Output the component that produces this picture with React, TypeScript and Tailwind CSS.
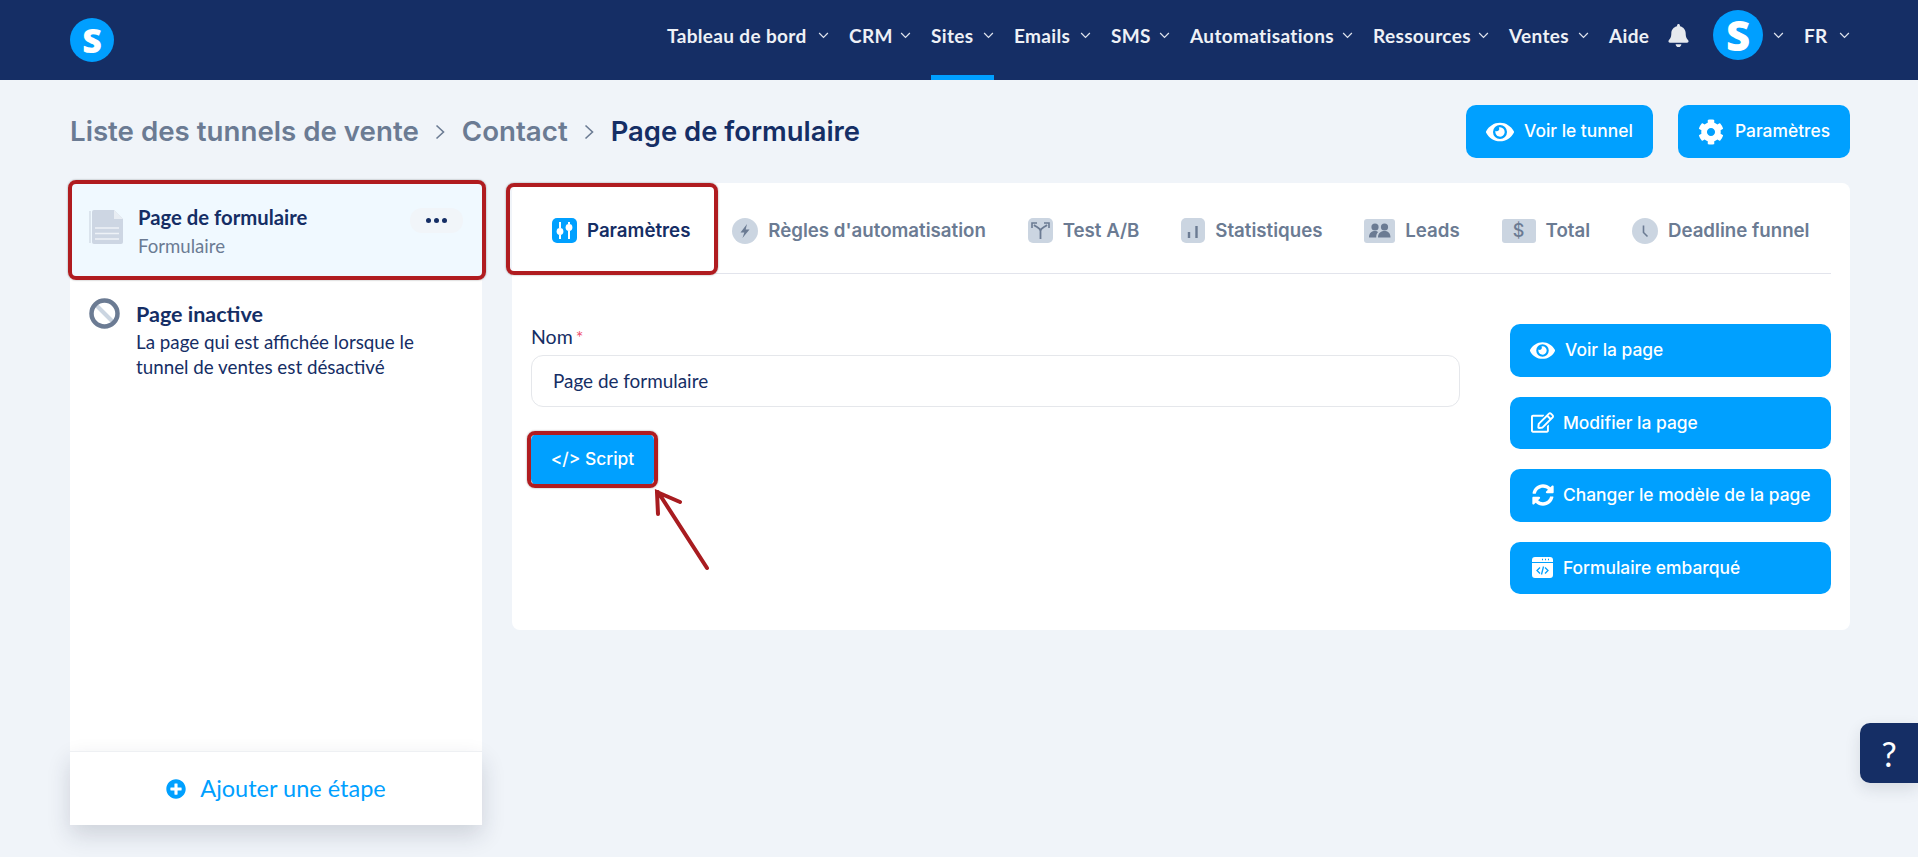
import React from "react";
import { FaBell, FaCog, FaEye, FaRegEdit, FaSyncAlt, FaPlusCircle } from "react-icons/fa";

const geo = "font-['Lato','Noto_Sans',sans-serif]";
const inter = "font-['Inter',sans-serif]";

function Chev({ className = "" }: { className?: string }) {
  return (
    <svg viewBox="0 0 12 8" className={"w-[11px] h-[7px] " + className} fill="none" stroke="currentColor" strokeWidth="1.4">
      <path d="M1 1.2 6 6.2 11 1.2" />
    </svg>
  );
}

function NavItem({ label, w, chev = true, active = false, gap = 20 }: { label: string; w: number; chev?: boolean; active?: boolean; gap?: number }) {
  return (
    <div className="relative flex items-center h-full" style={{ marginRight: gap }}>
      <span className="whitespace-nowrap text-[19px] tracking-[0.35px] font-bold text-[#eef1f6] pb-[8px]" style={{ width: w }}>{label}</span>
      {chev && <Chev className="ml-[10px] mb-[10px] text-[#dfe4ee]" />}
      {active && <div className="absolute left-0 right-0 bottom-0 h-[5px] bg-[#009fff]" />}
    </div>
  );
}

function LogoS({ size, font }: { size: number; font: number }) {
  return (
    <div className="rounded-full bg-[#009fff] flex items-center justify-center text-white font-['Open_Sans',sans-serif] font-extrabold" style={{ width: size, height: size, fontSize: font, lineHeight: 1 }}>
      S
    </div>
  );
}

function Crumb() {
  return (
    <svg viewBox="0 0 10 16" className="w-[10px] h-[16px] text-[#6b7b93]" fill="none" stroke="currentColor" strokeWidth="1.6">
      <path d="M1.5 1.5 8.5 8 1.5 14.5" />
    </svg>
  );
}

function Tab({ icon, label, active = false }: { icon: React.ReactNode; label: string; active?: boolean }) {
  return (
    <div className="flex items-center gap-[10px]">
      {icon}
      <span className={"whitespace-nowrap text-[18.7px] font-semibold " + (active ? "text-[#152e65]" : "text-[#6b7b93]")}>{label}</span>
    </div>
  );
}

function SideBtn({ icon, label, gap }: { icon: React.ReactNode; label: string; gap: number }) {
  return (
    <div className="h-[52.5px] rounded-[10px] bg-[#00a0ff] text-white flex items-center pl-[20px] text-[17.4px] font-medium">
      <span className="flex items-center justify-center w-[25px]">{icon}</span>
      <span className="whitespace-nowrap" style={{ marginLeft: gap }}>{label}</span>
    </div>
  );
}

const Red = "absolute border-4 border-[#b01c20] rounded-[8px] shadow-[0_0_2px_rgba(0,0,0,0.4)] pointer-events-none";

export default function App() {
  return (
    <div className={"relative min-h-[857px] bg-[#f0f4f9] overflow-hidden " + inter}>
      <header className="h-[80px] bg-[#152e65] flex items-center justify-between pl-[70px] pr-[68px]">
        <LogoS size={44} font={34} />
        <nav className={"flex items-center h-full " + geo}>
          <NavItem label="Tableau de bord" w={141} />
          <NavItem label="CRM" w={41} />
          <NavItem label="Sites" w={42} active />
          <NavItem label="Emails" w={56} />
          <NavItem label="SMS" w={38} />
          <NavItem label="Automatisations" w={142} />
          <NavItem label="Ressources" w={95} />
          <NavItem label="Ventes" w={59} />
          <NavItem label="Aide" w={38} chev={false} />
          <FaBell className="text-[#e6e9ee] text-[23px] mb-[10px]" />
          <div className="ml-[23px] mb-[10px]"><LogoS size={50} font={42} /></div>
          <Chev className="ml-[10px] mb-[10px] text-[#dfe4ee]" />
          <div className="ml-[20px]"><NavItem label="FR" w={25} gap={0} /></div>
        </nav>
      </header>

      <div className="flex items-center justify-between pl-[70px] pr-[68px] pt-[25px] h-[78px]">
        <div className="flex items-center gap-[16.5px] text-[27.7px] font-semibold text-[#6b7b93] whitespace-nowrap pt-[1px]">
          <span>Liste des tunnels de vente</span>
          <Crumb />
          <span>Contact</span>
          <Crumb />
          <span className="text-[#152e65] text-[27.4px]">Page de formulaire</span>
        </div>
        <div className="flex gap-[25px]">
          <div className="h-[53px] w-[187px] rounded-[10px] bg-[#00a0ff] text-white flex items-center pl-[20px] gap-[10px] text-[17.4px] font-medium">
            <FaEye className="text-[28px]" />
            <span>Voir le tunnel</span>
          </div>
          <div className="h-[53px] w-[172px] rounded-[10px] bg-[#00a0ff] text-white flex items-center pl-[20px] gap-[11px] text-[17.4px] font-medium">
            <FaCog className="text-[26px]" />
            <span>Paramètres</span>
          </div>
        </div>
      </div>

      <div className="flex gap-[30px] pl-[70px] pr-[68px] pt-[25px]">
        <aside className="w-[413px] h-[642px] flex flex-col bg-white">
          <div className={"relative h-[94px] bg-[#f0f9ff] flex items-start pl-[19px] pr-[19px] " + geo}>
            <svg viewBox="0 0 34 34" className="w-[34px] h-[34px] mt-[27px] shrink-0">
              <path d="M1 1V33" stroke="#d5dde7" strokeWidth="1.500" />
              <path d="M3 2a2 2 0 0 1 2-2h20l9 9v23a2 2 0 0 1-2 2H5a2 2 0 0 1-2-2z" fill="#cdd6e3" />
              <path d="M25 0l9 9h-9z" fill="#e8edf3" />
              <path d="M6 18h24M6 23.5h24M6 29h24" stroke="#eef2f7" strokeWidth="1.6" />
            </svg>
            <div className="ml-[15px] mt-[22px]">
              <div className="text-[20.3px] font-bold text-[#152e65] leading-[24px] whitespace-nowrap">Page de formulaire</div>
              <div className="text-[18.6px] text-[#6b7b93] leading-[24px] mt-[5px]">Formulaire</div>
            </div>
            <div className="ml-auto mt-[25px] w-[53px] h-[25px] rounded-[12px] bg-[#f1f5f9] flex items-center justify-center gap-[3px]">
              <i className="w-[5px] h-[5px] rounded-full bg-[#152e65]" />
              <i className="w-[5px] h-[5px] rounded-full bg-[#152e65]" />
              <i className="w-[5px] h-[5px] rounded-full bg-[#152e65]" />
            </div>
            <div className={Red + " -left-[2.5px] -right-[4px] -top-[3px] -bottom-[3px]"} />
          </div>
          <div className={"flex items-start pl-[19px] pr-[20px] pt-[21px] " + geo}>
            <svg viewBox="0 0 31 31" className="w-[31px] h-[31px] shrink-0">
              <path d="M6 6 25 25" stroke="#cbd5e1" strokeWidth="4" />
              <circle cx="15.5" cy="15.5" r="13" fill="none" stroke="#6b7b93" strokeWidth="4.5" />
            </svg>
            <div className="ml-[16px] mt-[3px]">
              <div className="text-[21.5px] font-bold text-[#152e65] leading-[26px]">Page inactive</div>
              <div className="text-[18.8px] text-[#152e65] leading-[25px] mt-[2px]">La page qui est affichée lorsque le<br />tunnel de ventes est désactivé</div>
            </div>
          </div>
          <div className={"mt-auto h-[74px] border-t border-[#eef0f3] bg-white flex items-center justify-center gap-[14px] shadow-[0_10px_22px_rgba(30,40,60,0.16)] " + geo}>
            <FaPlusCircle className="text-[20px] text-[#00a0ff]" />
            <span className="text-[23.5px] text-[#00a0ff]">Ajouter une étape</span>
          </div>
        </aside>

        <main className="relative flex-1 h-[447px] bg-white rounded-[8px] pl-[19px] pr-[19px]">
          <div className="relative h-[91px] border-b border-[#e2e4ec] pl-[21px] pt-[6px] flex items-center gap-[41.8px]">
            <Tab
              active
              label="Paramètres"
              icon={
                <svg viewBox="0 0 25 25" className="w-[25px] h-[25px]">
                  <rect width="25" height="25" rx="5" fill="#00a0ff" />
                  <path d="M8 4v6M8 17v4M17 4v2M17 13v8" stroke="#fff" strokeWidth="2" />
                  <circle cx="8" cy="13.5" r="3.4" fill="#fff" />
                  <circle cx="17" cy="9.5" r="3.4" fill="#fff" />
                </svg>
              }
            />
            <Tab
              label="Règles d'automatisation"
              icon={
                <svg viewBox="0 0 26 26" className="w-[26px] h-[26px]">
                  <circle cx="13" cy="13" r="13" fill="#cbd5e1" />
                  <path d="M15 6 8.5 14.5h3.8L10.5 20l7-8.500h-3.800z" fill="#6b7b93" />
                </svg>
              }
            />
            <Tab
              label="Test A/B"
              icon={
                <svg viewBox="0 0 25 25" className="w-[25px] h-[25px]">
                  <rect width="25" height="25" rx="5" fill="#cbd5e1" />
                  <path d="M12.5 21v-8M12.5 13C12.5 10 9 9.500 6 7M12.5 13C12.500 10 16 9.500 19 7" stroke="#6b7b93" strokeWidth="1.8" fill="none" />
                  <path d="M4 10V5h5M21 10V5h-5" stroke="#6b7b93" strokeWidth="1.6" fill="none" />
                </svg>
              }
            />
            <Tab
              label="Statistiques"
              icon={
                <svg viewBox="0 0 24 25" className="w-[24px] h-[25px]">
                  <rect width="24" height="25" rx="5" fill="#cbd5e1" />
                  <path d="M8 14v6M15.500 8v12" stroke="#6b7b93" strokeWidth="2.400" />
                </svg>
              }
            />
            <Tab
              label="Leads"
              icon={
                <svg viewBox="0 0 31 24" className="w-[31px] h-[24px]">
                  <rect width="31" height="24" rx="3" fill="#cbd5e1" />
                  <circle cx="11" cy="8" r="3.600" fill="#6b7b93" />
                  <circle cx="20.500" cy="8" r="3.600" fill="#6b7b93" />
                  <path d="M5 18.500c0-5 3-6.500 6-6.500 1.500 0 2.500.5 3.200 1-1.400 1.300-2 3.200-2 5.500zM14 18.500c0-5 3.400-6.500 6.500-6.500s6 1.500 6 6.500z" fill="#6b7b93" />
                </svg>
              }
            />
            <Tab
              label="Total"
              icon={
                <div className="w-[34px] h-[24px] rounded-[3px] bg-[#cbd5e1] flex items-center justify-center text-[#6b7b93] text-[18px] font-medium leading-none">$</div>
              }
            />
            <Tab
              label="Deadline funnel"
              icon={
                <svg viewBox="0 0 26 26" className="w-[26px] h-[26px]">
                  <circle cx="13" cy="13" r="13" fill="#cbd5e1" />
                  <path d="M11.500 7.500v7l4 4" stroke="#6b7b93" strokeWidth="1.600" fill="none" />
                </svg>
              }
            />
            <div className={Red + " -left-[25px] top-0 -bottom-[2px] w-[212px]"} />
          </div>

          <div className="flex gap-[50px] mt-[51px]">
            <div className={"w-[929px] " + geo}>
              <div className="text-[19.5px] text-[#152e65] leading-[24px]">
                Nom<span className="text-[#f0506e] ml-[3px] text-[18px]">*</span>
              </div>
              <div className="mt-[6px] h-[52px] rounded-[12px] border border-[#e5e7eb] bg-white flex items-center pl-[21px] text-[18.9px] text-[#152e65]">
                Page de formulaire
              </div>
              <div className={"relative mt-[27px] w-[123px] h-[51px] rounded-[6px] bg-[#00a0ff] text-white flex items-center justify-center text-[17.4px] font-medium " + inter}>
                &lt;/&gt; Script
                <div className={Red + " -inset-x-[4px] -top-[3px] -bottom-[3px]"} />
                <svg viewBox="0 0 65 90" className="absolute left-[119px] top-[50px] w-[65px] h-[90px]" fill="none" stroke="#a81c20" strokeWidth="4" strokeLinecap="round">
                  <path d="M8 8 57 84M8 30 7 8 30 18" />
                </svg>
              </div>
            </div>
            <div className="w-[321px] flex flex-col gap-[20px] -mt-[1px]">
              <SideBtn gap={10} label="Voir la page" icon={<FaEye className="text-[25px]" />} />
              <SideBtn gap={8} label="Modifier la page" icon={<FaRegEdit className="text-[23px]" />} />
              <SideBtn gap={8} label="Changer le modèle de la page" icon={<FaSyncAlt className="text-[22px]" />} />
              <SideBtn
                gap={8}
                label="Formulaire embarqué"
                icon={
                  <svg viewBox="0 0 21 21" className="w-[21px] h-[21px]">
                    <path d="M3 0h15a3 3 0 0 1 3 3v2H0V3a3 3 0 0 1 3-3zM0 6h21v12a3 3 0 0 1-3 3H3a3 3 0 0 1-3-3z" fill="#fff" />
                    <path d="M10 2.500h1M13 2.500h1M16 2.500h1" stroke="#00a0ff" strokeWidth="1.300" />
                    <path d="M8 10.500l-3 3 3 3M13 10.500l3 3-3 3M11.500 9.500l-2 8" stroke="#00a0ff" strokeWidth="1.300" fill="none" />
                  </svg>
                }
              />
            </div>
          </div>
        </main>
      </div>

      <div className="absolute right-0 top-[723px] w-[58px] h-[60px] bg-[#152e65] rounded-l-[10px] flex items-center justify-center text-white text-[34px] font-['Lato',sans-serif] shadow-[0_6px_16px_rgba(30,40,60,0.12)]">
        ?
      </div>
    </div>
  );
}
